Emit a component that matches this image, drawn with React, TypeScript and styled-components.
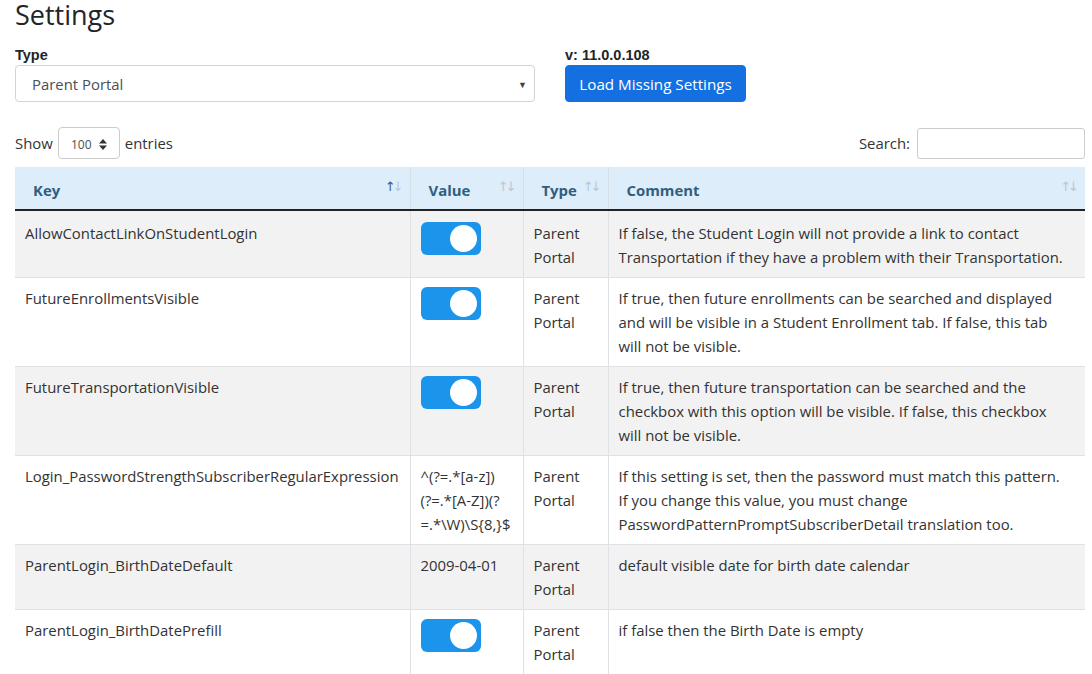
import React from "react";
import styled, { createGlobalStyle } from "styled-components";

const Global = createGlobalStyle`
  html, body { margin: 0; padding: 0; background: #fff; }
  body {
    font-family: "Open Sans", "Noto Sans", "Liberation Sans", sans-serif;
    font-size: 14.9px;
    color: #212529;
  }
  * { box-sizing: border-box; }
`;

const Page = styled.div`
  padding: 0 7px 0 15px;
`;

const Title = styled.h3`
  margin: 0;
  font-size: 27px;
  font-weight: 500;
  line-height: 29px;
  color: #212529;
`;

const FormRow = styled.div`
  display: flex;
  gap: 30px;
  margin-top: 15px;
`;

const Field = styled.div<{ $w?: number }>`
  display: flex;
  flex-direction: column;
  width: ${(p) => (p.$w ? `${p.$w}px` : "auto")};
`;

const Label = styled.div`
  font-family: "Liberation Sans", Arial, sans-serif;
  font-weight: 700;
  font-size: 14.5px;
  line-height: 18px;
  height: 21px;
  padding-top: 2px;
`;

const SelectBox = styled.div`
  position: relative;
  height: 37px;
  border: 1px solid #ced4da;
  border-radius: 4px;
  display: flex;
  align-items: center;
  padding-left: 16px;
  color: #495057;
`;

const Caret = styled.span`
  position: absolute;
  right: 7px;
  top: 12px;
  font-size: 9px;
  color: #444;
`;

const PrimaryButton = styled.button`
  height: 37px;
  width: 181px;
  background: #1470e0;
  color: #fff;
  border: 1px solid #1470e0;
  border-radius: 4px;
  font-family: inherit;
  font-size: 15.2px;
  padding: 0 8px;
  text-align: center;
`;

const ToolsRow = styled.div`
  display: flex;
  align-items: center;
  justify-content: space-between;
  margin-top: 25px;
  height: 32px;
  color: #333;
`;

const LengthControl = styled.div`
  display: flex;
  align-items: center;
  gap: 5px;
`;

const SmallSelect = styled.div`
  width: 62px;
  height: 32px;
  border: 1px solid #ccc;
  border-radius: 4px;
  display: flex;
  align-items: center;
  justify-content: center;
  gap: 7px;
  font-size: 12px;
  color: #495057;
  padding-top: 2px;
`;

const SearchInput = styled.div`
  width: 168px;
  height: 31px;
  border: 1px solid #ccc;
  border-radius: 3px;
  margin-left: 2px;
`;

const Table = styled.table`
  width: 1070px;
  margin-top: 8px;
  border-collapse: collapse;
  table-layout: fixed;
`;

const HeadCell = styled.th<{ $w: number }>`
  position: relative;
  width: ${(p) => p.$w}px;
  background: #ddedfa;
  color: #2f5f80;
  font-weight: 700;
  text-align: left;
  height: 43px;
  padding: 4px 28px 0 18px;
  border-left: 1px solid #d6dee6;
  border-bottom: 2px solid #222;
  line-height: 24px;
  &:first-child { border-left: none; }
`;

const SortIcon = styled.span`
  position: absolute;
  right: 9px;
  top: 8px;
  font-family: "DejaVu Sans", sans-serif;
  font-size: 13px;
  letter-spacing: -3px;
  color: #b8c8d6;
  font-weight: 400;
`;

const Up = styled.span<{ $active?: boolean }>`
  color: ${(p) => (p.$active ? "#3a5a78" : "#b8c8d6")};
`;

const Row = styled.tr<{ $odd: boolean }>`
  background: ${(p) => (p.$odd ? "#f2f2f2" : "#ffffff")};
  &:first-child td { padding-top: 10px; }
`;

const Cell = styled.td<{ $padRight?: number }>`
  vertical-align: top;
  padding: 8px ${(p) => p.$padRight ?? 10}px 8px 10px;
  line-height: 24px;
  border-left: 1px solid #dee2e6;
  border-bottom: 1px solid #dee2e6;
  color: #333;
  overflow-wrap: break-word;
  &:first-child { border-left: none; }
`;

const Toggle = styled.div`
  width: 60px;
  height: 33px;
  border-radius: 6px;
  background: #1a95eb;
  position: relative;
  margin: 1px 0 0 0;
`;

const Knob = styled.div`
  position: absolute;
  right: 4px;
  top: 3px;
  width: 27px;
  height: 27px;
  border-radius: 50%;
  background: #fff;
`;

type RowData = { key: string; value: React.ReactNode | boolean; comment: string };

const rows: RowData[] = [
  {
    key: "AllowContactLinkOnStudentLogin",
    value: true,
    comment:
      "If false, the Student Login will not provide a link to contact Transportation if they have a problem with their Transportation.",
  },
  {
    key: "FutureEnrollmentsVisible",
    value: true,
    comment:
      "If true, then future enrollments can be searched and displayed and will be visible in a Student Enrollment tab. If false, this tab will not be visible.",
  },
  {
    key: "FutureTransportationVisible",
    value: true,
    comment:
      "If true, then future transportation can be searched and the checkbox with this option will be visible. If false, this checkbox will not be visible.",
  },
  {
    key: "Login_PasswordStrengthSubscriberRegularExpression",
    value: (
      <>
        ^(?=.*[a-z])
        <br />
        (?=.*[A-Z])(?
        <br />
        =.*\W)\S{"{8,}"}$
      </>
    ),
    comment:
      "If this setting is set, then the password must match this pattern. If you change this value, you must change PasswordPatternPromptSubscriberDetail translation too.",
  },
  {
    key: "ParentLogin_BirthDateDefault",
    value: "2009-04-01",
    comment: "default visible date for birth date calendar",
  },
  {
    key: "ParentLogin_BirthDatePrefill",
    value: true,
    comment: "if false then the Birth Date is empty",
  },
];

const cols = [
  { name: "Key", w: 395, active: true },
  { name: "Value", w: 113 },
  { name: "Type", w: 85 },
  { name: "Comment", w: 477 },
];

const Spinner = () => (
  <svg width="8" height="11" viewBox="0 0 8 11">
    <path d="M4 0 L8 4.5 H0 Z M0 6.5 H8 L4 11 Z" fill="#333" />
  </svg>
);

export default function App() {
  return (
    <Page>
      <Global />
      <Title>Settings</Title>
      <FormRow>
        <Field $w={520}>
          <Label>Type</Label>
          <SelectBox>
            Parent Portal
            <Caret>▼</Caret>
          </SelectBox>
        </Field>
        <Field>
          <Label>v: 11.0.0.108</Label>
          <PrimaryButton>Load Missing Settings</PrimaryButton>
        </Field>
      </FormRow>
      <ToolsRow>
        <LengthControl>
          Show
          <SmallSelect>
            100 <Spinner />
          </SmallSelect>
          entries
        </LengthControl>
        <LengthControl>
          Search:
          <SearchInput />
        </LengthControl>
      </ToolsRow>
      <Table>
        <thead>
          <tr>
            {cols.map((c) => (
              <HeadCell key={c.name} $w={c.w}>
                {c.name}
                <SortIcon>
                  <Up $active={c.active}>↑</Up>↓
                </SortIcon>
              </HeadCell>
            ))}
          </tr>
        </thead>
        <tbody>
          {rows.map((r, i) => (
            <Row key={r.key} $odd={i % 2 === 0}>
              <Cell>{r.key}</Cell>
              <Cell>
                {typeof r.value === "boolean" ? (
                  <Toggle>
                    <Knob />
                  </Toggle>
                ) : (
                  r.value
                )}
              </Cell>
              <Cell>Parent Portal</Cell>
              <Cell $padRight={16}>{r.comment}</Cell>
            </Row>
          ))}
        </tbody>
      </Table>
    </Page>
  );
}
